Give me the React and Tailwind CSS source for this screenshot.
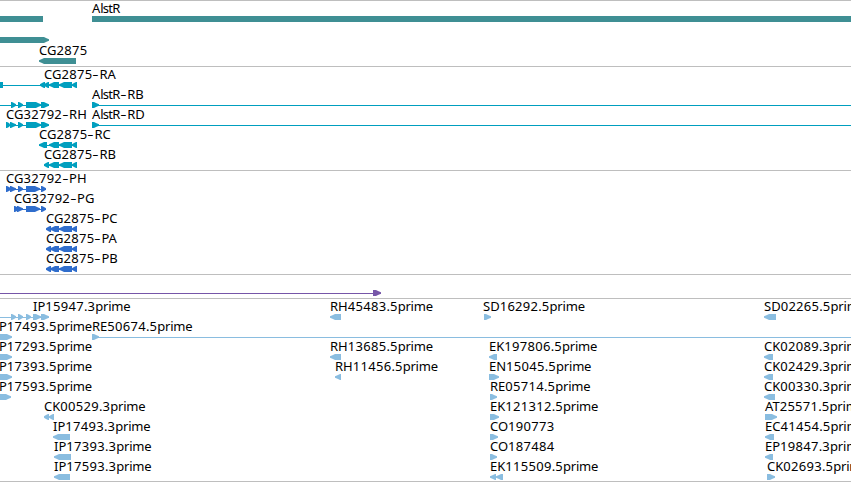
const TEAL = "#3f8f94"
const CYAN = "#009fbf"
const BLUE = "#2f6dcc"
const PURPLE = "#7656a8"
const SKY = "#8abde0"

const VIEW_WIDTH = 851

// label: [x, text], line: [from, to], r / l: exons pointing right / left, box: plain blocks
const genes = [
    { labels: [[92, "AlstR"]], box: [[0, 43], [92, 851]] },
    { r: [[-20, 49]] },
    { labels: [[39, "CG2875"]], l: [[39, 76]] },
]

const transcripts = [
    { labels: [[44, "CG2875-RA"]], lines: [[0, 77]], box: [[0, 3]], l: [[40, 45], [44, 49], [49, 59], [59, 72], [72, 77]] },
    { labels: [[92, "AlstR-RB"]], lines: [[0, 49], [92, 851]], r: [[11, 16], [18, 23], [26, 41], [41, 49], [92, 99]] },
    { labels: [[6, "CG32792-RH"], [92, "AlstR-RD"]], lines: [[6, 49], [92, 851]], r: [[6, 10], [10, 16], [18, 23], [26, 41], [41, 49], [92, 99]] },
    { labels: [[39, "CG2875-RC"]], lines: [[39, 77]], l: [[39, 47], [49, 59], [59, 72], [72, 77]] },
    { labels: [[44, "CG2875-RB"]], lines: [[44, 77]], l: [[44, 49], [49, 59], [59, 72], [72, 77]] },
]

const proteinExons = [[46, 51], [50, 59], [59, 72], [72, 77]]

const proteins = [
    { labels: [[6, "CG32792-PH"]], lines: [[6, 46]], r: [[6, 11], [10, 16], [18, 23], [26, 40], [41, 46]] },
    { labels: [[14, "CG32792-PG"]], lines: [[14, 46]], r: [[14, 18], [17, 23], [26, 40], [41, 46]] },
    { labels: [[46, "CG2875-PC"]], lines: [[46, 77]], l: proteinExons },
    { labels: [[46, "CG2875-PA"]], lines: [[46, 77]], l: proteinExons },
    { labels: [[46, "CG2875-PB"]], lines: [[46, 77]], l: proteinExons },
]

const insertions = [
    { lines: [[0, 381]], r: [[373, 381]] },
]

const ests = [
    {
        labels: [[33, "IP15947.3prime"], [330, "RH45483.5prime"], [483, "SD16292.5prime"], [764, "SD02265.5prime"]],
        lines: [[0, 49]],
        r: [[11, 16], [18, 23], [26, 31], [33, 41], [41, 49], [484, 491]],
        l: [[330, 341], [764, 776]],
    },
    { labels: [[-5.5, "IP17493.5prime"], [92, "RE50674.5prime"]], lines: [[92, 851]], r: [[-10, 12], [92, 99]] },
    {
        labels: [[-5.5, "IP17293.5prime"], [330, "RH13685.5prime"], [489, "EK197806.5prime"], [764, "CK02089.3prime"]],
        r: [[-10, 12]],
        l: [[330, 341], [489, 497], [764, 773]],
    },
    {
        labels: [[-5.5, "IP17393.5prime"], [335, "RH11456.5prime"], [489, "EN15045.5prime"], [764, "CK02429.3prime"]],
        r: [[-10, 12], [489, 499]],
        l: [[335, 341], [764, 773]],
    },
    {
        labels: [[-5.5, "IP17593.5prime"], [490, "RE05714.5prime"], [764, "CK00330.3prime"]],
        r: [[-10, 11], [490, 497]],
        l: [[764, 775]],
    },
    {
        labels: [[44, "CK00529.3prime"], [490, "EK121312.5prime"], [765, "AT25571.5prime"]],
        r: [[490, 499], [765, 777]],
        l: [[44, 49], [49, 54]],
    },
    {
        labels: [[53, "IP17493.3prime"], [490, "CO190773"], [765, "EC41454.5prime"]],
        r: [[490, 498]],
        l: [[53, 70], [765, 774]],
    },
    {
        labels: [[54, "IP17393.3prime"], [490, "CO187484"], [765, "EP19847.3prime"]],
        r: [[490, 497]],
        l: [[54, 71], [765, 773]],
    },
    {
        labels: [[54, "IP17593.3prime"], [490, "EK115509.5prime"], [767, "CK02693.5prime"]],
        r: [[767, 775]],
        l: [[54, 70], [490, 496], [496, 503]],
    },
]

const arrow = (tail, tip)=>{
    const dir = Math.sign(tip - tail)
    const neck = tip - dir * Math.min(6, Math.abs(tip - tail))
    return `${tail},0 ${neck + dir},0 ${neck + dir * 3},1 ${tip},2.3 ${tip},3.7 ${neck + dir * 3},5 ${neck + dir},6 ${tail},6`
}

const partClass = (part)=>{
    if(part === "-") return "inline-block w-[7px] text-center scale-x-150"
    if(/\d/.test(part)) return "tracking-[0.3px]"
    if(part === "lst") return "tracking-[-0.8px]"
    if(part === "prime") return "tracking-[-0.2px]"
    return "tracking-normal"
}

const Label = ({ x, text })=>(
    <span className="absolute top-0 whitespace-pre" style={{ left: x }}>
        {
            text.split(/(\d+|-|[a-z]+)/).filter(Boolean).map((part, index)=>(
                <span key={index} className={partClass(part)}>{part}</span>
            ))
        }
    </span>
)

const Row = ({ row, color, tall })=>{
    const { labels = [], lines = [], box = [], r = [], l = [] } = row
    return (
        <div className={`relative ${tall ? "h-[21px]" : "h-5"}`}>
            <svg className="absolute left-0 top-[15px]" width={VIEW_WIDTH} height="6" fill={color}>
                {lines.map(([a, b])=><rect key={a} x={a} y="3" width={b - a} height="1" />)}
                {box.map(([a, b])=><rect key={a} x={a} y="0" width={b - a} height="6" />)}
                {r.map(([a, b])=><polygon key={a} points={arrow(a, b)} />)}
                {l.map(([a, b])=><polygon key={a} points={arrow(b, a)} />)}
            </svg>
            {labels.map(([x, text])=><Label key={text} x={x} text={text} />)}
        </div>
    )
}

const Track = ({ rows, color, tall, className })=>(
    <div className={`border-t border-[#bebebe] ${className}`}>
        {rows.map((row, index)=><Row key={index} row={row} color={color} tall={tall} />)}
    </div>
)

const App = ()=>{
    return (
        <div className="w-[851px] h-[482px] overflow-hidden bg-white text-black text-[13px] leading-[14px] font-['Noto_Sans',sans-serif]">
            <Track rows={genes} color={TEAL} tall className="pb-0.5" />
            <Track rows={transcripts} color={CYAN} className="pb-[3px]" />
            <Track rows={proteins} color={BLUE} className="pb-[3px]" />
            <Track rows={insertions} color={PURPLE} className="pb-[3px]" />
            <Track rows={ests} color={SKY} className="pb-0.5 border-b" />
        </div>
    )
}

export default App
